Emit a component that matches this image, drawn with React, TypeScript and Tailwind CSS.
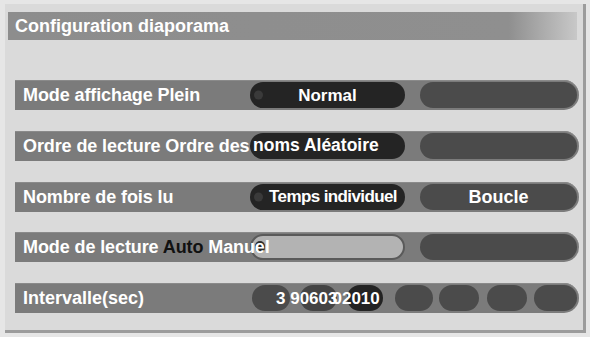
import React from "react";

function Dot({ color = "bg-[#3a3a3a]" }: { color?: string }) {
  return <span className={`absolute left-[4px] top-1/2 -translate-y-1/2 w-[9px] h-[9px] rounded-full ${color}`} />;
}

function Bar({ children }: { children: React.ReactNode }) {
  return (
    <div className="relative w-[564px] h-[30px] bg-[#7b7b7b] rounded-r-[15px] flex items-center shadow-[inset_0_1px_0_#8a8a8a]">
      {children}
    </div>
  );
}

function Label({ children }: { children: React.ReactNode }) {
  return (
    <div className="relative z-10 w-[235px] shrink-0 pl-[8px] whitespace-nowrap text-white text-[18px] leading-none tracking-[-0.1px]">
      {children}
    </div>
  );
}

export default function App() {
  return (
    <div className="w-[590px] h-[337px] bg-[#e6e6e6] pl-[5px] pt-[4px] font-['Liberation_Sans',Arial,sans-serif] font-bold">
      <div className="w-[581px] h-[329px] bg-[#dadada] border-r-[3px] border-b-[3px] border-[#9c9c9c] pl-[3px] pt-[8px] flex flex-col">
        <div className="w-[569px] h-[28px] flex items-center pl-[7px] text-white text-[18px] leading-none bg-[linear-gradient(to_right,#8d8d8d_0%,#8f8f8f_88%,#c8c8c8_100%)]">
          Configuration diaporama
        </div>
        <div className="mt-[40px] pl-[7px] flex flex-col gap-[20.75px]">
          <Bar>
            <Label>Mode affichage Plein</Label>
            <div className="relative w-[155px] h-[26px] rounded-full bg-[#242424] flex items-center justify-center text-white text-[17px] leading-none">
              <Dot />
              Normal
            </div>
            <div className="ml-[15px] w-[157px] h-[26px] rounded-full bg-[#4b4b4b]" />
          </Bar>
          <Bar>
            <Label>Ordre de lecture Ordre des</Label>
            <div className="relative w-[155px] h-[26px] rounded-full bg-[#242424] flex items-center pl-[3px] text-white text-[17.5px] leading-none whitespace-nowrap">
              noms Aléatoire
            </div>
            <div className="ml-[15px] w-[157px] h-[26px] rounded-full bg-[#4b4b4b]" />
          </Bar>
          <Bar>
            <Label>Nombre de fois lu</Label>
            <div className="relative w-[155px] h-[26px] rounded-full bg-[#242424] flex items-center justify-end pr-[8px] text-white text-[17px] leading-none whitespace-nowrap tracking-[-0.6px]">
              <Dot />
              Temps individuel
            </div>
            <div className="ml-[15px] w-[157px] h-[26px] rounded-full bg-[#4b4b4b] flex items-center justify-center text-white text-[18px] leading-none">
              Boucle
            </div>
          </Bar>
          <Bar>
            <Label>
              Mode de lecture <span className="text-[#111111]">Auto</span> Manuel
            </Label>
            <div className="relative w-[155px] h-[26px] rounded-full bg-[#b3b3b3] border-[2px] border-[#5a5a5a]">
              <span className="absolute left-[3px] top-1/2 -translate-y-1/2 w-[10px] h-[12px] rounded-full bg-[#2e2e2e]" />
            </div>
            <div className="ml-[15px] w-[157px] h-[26px] rounded-full bg-[#4b4b4b]" />
          </Bar>
          <Bar>
            <div className="w-[237px] shrink-0 pl-[8px] whitespace-nowrap text-white text-[18px] leading-none">Intervalle(sec)</div>
            <div className="flex">
              <div className="w-[38px] h-[26px] rounded-full bg-[#4b4b4b]" />
              <div className="ml-[10px] w-[37px] h-[26px] rounded-full bg-[#444444]" />
              <div className="ml-[10px] w-[36px] h-[26px] rounded-full bg-[#232323]" />
              <div className="ml-[12px] w-[38px] h-[26px] rounded-full bg-[#4b4b4b]" />
              <div className="ml-[6px] w-[40px] h-[26px] rounded-full bg-[#4b4b4b]" />
              <div className="ml-[8px] w-[40px] h-[26px] rounded-full bg-[#4b4b4b]" />
              <div className="ml-[7px] w-[43px] h-[26px] rounded-full bg-[#4b4b4b]" />
            </div>
            <div className="absolute left-[261px] top-1/2 -translate-y-1/2 whitespace-nowrap text-white text-[17px] leading-none flex">
              <span>3 9060</span>
              <span>3</span>
              <span className="-ml-[5px]">02010</span>
            </div>
          </Bar>
        </div>
      </div>
    </div>
  );
}
